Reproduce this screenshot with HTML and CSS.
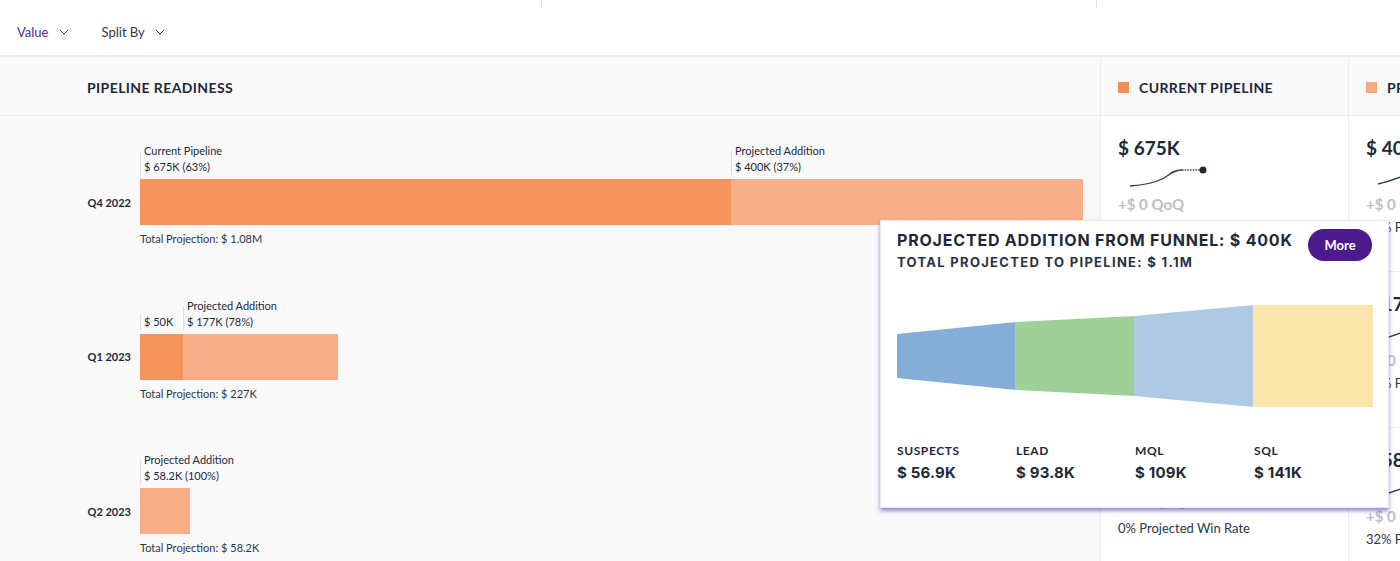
FILE: index.html
```html
<!DOCTYPE html>
<html lang="en">
<head>
  <meta charset="UTF-8">
  <title>Pipeline Readiness</title>
  <link rel="stylesheet" href="styles.css">
</head>
<body>
  <div class="stats">
    <div class="stat stat-a"></div>
    <div class="stat stat-b"></div>
    <div class="stat stat-c"></div>
  </div>

  <div class="toolbar">
    <button class="drop drop-active">Value <svg width="10" height="6" viewBox="0 0 10 6"><path d="M1 1l4 4 4-4" /></svg></button>
    <button class="drop">Split By <svg width="10" height="6" viewBox="0 0 10 6"><path d="M1 1l4 4 4-4" /></svg></button>
  </div>

  <div class="main">
    <section class="readiness">
      <div class="panel-head">PIPELINE READINESS</div>
      <div class="chart">

        <div class="row">
          <div class="notes">
            <div class="note" style="width:591px"><div>Current Pipeline</div><div>$ 675K (63%)</div></div>
            <div class="note" style="width:352px"><div>Projected Addition</div><div>$ 400K (37%)</div></div>
          </div>
          <div class="bar-line">
            <span class="quarter">Q4 2022</span>
            <div class="bar">
              <div class="seg seg-current" style="width:591px"></div>
              <div class="seg seg-projected" style="width:352px"></div>
            </div>
          </div>
          <div class="total">Total Projection: $ 1.08M</div>
        </div>

        <div class="row">
          <div class="notes">
            <div class="note" style="width:43px"><div>$ 50K</div></div>
            <div class="note" style="width:155px"><div>Projected Addition</div><div>$ 177K (78%)</div></div>
          </div>
          <div class="bar-line">
            <span class="quarter">Q1 2023</span>
            <div class="bar">
              <div class="seg seg-current" style="width:43px"></div>
              <div class="seg seg-projected" style="width:155px"></div>
            </div>
          </div>
          <div class="total">Total Projection: $ 227K</div>
        </div>

        <div class="row">
          <div class="notes">
            <div class="note" style="width:50px"><div>Projected Addition</div><div>$ 58.2K (100%)</div></div>
          </div>
          <div class="bar-line">
            <span class="quarter">Q2 2023</span>
            <div class="bar">
              <div class="seg seg-projected" style="width:50px"></div>
            </div>
          </div>
          <div class="total">Total Projection: $ 58.2K</div>
        </div>

      </div>
    </section>

    <section class="col">
      <div class="col-head"><span class="swatch swatch-current"></span>CURRENT PIPELINE</div>
      <div class="card">
        <div class="value">$ 675K</div>
        <svg class="spark" width="100" height="30" viewBox="0 0 100 30">
          <path d="M12 26 C 26 25, 36 23, 44 19 S 54 10, 64 10" />
          <path class="dots" d="M64 10 H 85" />
          <circle cx="85" cy="10" r="3.5" />
        </svg>
        <div class="qoq">+$ 0 QoQ</div>
        <div class="win">68% Projected Win Rate</div>
      </div>
      <div class="card">
        <div class="value">$ 50K</div>
        <svg class="spark" width="100" height="30" viewBox="0 0 100 30">
          <path d="M12 24 C 40 22, 60 14, 85 12" />
          <circle cx="85" cy="12" r="3.5" />
        </svg>
        <div class="qoq">+$ 0 QoQ</div>
        <div class="win">22% Projected Win Rate</div>
      </div>
      <div class="card card-flat">
        <div class="value">$ 0</div>
        <svg class="spark" width="100" height="19" viewBox="0 0 100 19">
          <path d="M12 12 H 85" />
        </svg>
        <div class="qoq">+$ 0 QoQ</div>
        <div class="win">0% Projected Win Rate</div>
      </div>
    </section>

    <section class="col">
      <div class="col-head"><span class="swatch swatch-projected"></span>PROJECTED ADDITION</div>
      <div class="card">
        <div class="value">$ 400K</div>
        <svg class="spark" width="100" height="30" viewBox="0 0 100 30">
          <path d="M12 24 C 30 20, 45 12, 70 6" />
        </svg>
        <div class="qoq">+$ 0 QoQ</div>
        <div class="win">32% Projected Win Rate</div>
      </div>
      <div class="card">
        <div class="value">$ 177K</div>
        <svg class="spark" width="100" height="30" viewBox="0 0 100 30">
          <path d="M12 24 C 30 20, 45 12, 70 6" />
        </svg>
        <div class="qoq">+$ 0 QoQ</div>
        <div class="win">32% Projected Win Rate</div>
      </div>
      <div class="card">
        <div class="value">$ 58.2K</div>
        <svg class="spark" width="100" height="30" viewBox="0 0 100 30">
          <path d="M12 24 C 30 20, 45 12, 70 6" />
        </svg>
        <div class="qoq">+$ 0 QoQ</div>
        <div class="win">32% Projected Win Rate</div>
      </div>
    </section>

    <div class="tooltip">
      <div class="tip-head">
        <div>
          <div class="tip-title">PROJECTED ADDITION FROM FUNNEL: $ 400K</div>
          <div class="tip-sub">TOTAL PROJECTED TO PIPELINE: $ 1.1M</div>
        </div>
        <button class="more">More</button>
      </div>
      <svg class="funnel" width="476" height="102" viewBox="0 0 476 102">
        <polygon fill="#84aed5" points="0,29 119,17 119,85 0,73" />
        <polygon fill="#9fd098" points="118,17 238,11 238,91 118,85" />
        <polygon fill="#adc9e4" points="237,11 357,0 357,102 237,91" />
        <rect fill="#fae5aa" x="356" y="0" width="120" height="102" />
      </svg>
      <div class="stages">
        <div><div class="stage-name">SUSPECTS</div><div class="stage-value">$ 56.9K</div></div>
        <div><div class="stage-name">LEAD</div><div class="stage-value">$ 93.8K</div></div>
        <div><div class="stage-name">MQL</div><div class="stage-value">$ 109K</div></div>
        <div><div class="stage-name">SQL</div><div class="stage-value">$ 141K</div></div>
      </div>
    </div>
  </div>
</body>
</html>
```

FILE: styles.css
```css
* { box-sizing: border-box; }
body { margin: 0; font-family: Lato, "Open Sans", sans-serif; color: #1d2939; background: #fff; overflow: hidden; height: 561px; }

.stats { display: flex; height: 8px; }
.stat-a { width: 542px; border-right: 1px solid #e4e4e8; }
.stat-b { width: 555px; border-right: 1px solid #e4e4e8; }
.stat-c { flex: 1; }

.toolbar { height: 49px; display: flex; align-items: center; gap: 33px; padding: 0 0 0 17px; border-bottom: 2px solid #ebebf0; }
.drop { font: inherit; font-size: 13px; background: none; border: 0; padding: 0; color: #2d3748; display: flex; align-items: center; gap: 10px; cursor: pointer; }
.drop svg path { fill: none; stroke: currentColor; stroke-width: 1; }
.drop-active { color: #4f2a8f; }

.main { display: flex; position: relative; height: 504px; }

.readiness { flex: 0 0 1100px; background: #f9f9fa; }
.panel-head { height: 59px; line-height: 58px; padding: 2px 0 0 87px; font-size: 14px; font-weight: 700; border-bottom: 1px solid #ececef; letter-spacing: 0.4px; }
.chart { padding-top: 27px; }
.row { height: 154.5px; }
.notes { display: flex; align-items: flex-end; margin-left: 140px; padding-bottom: 4px; font-size: 11px; line-height: 16px; color: #1d2939; }
.note { padding-left: 4px; white-space: nowrap; background: linear-gradient(#dde0e6, #dde0e6) left bottom / 1px 24px no-repeat; }
.bar-line { display: flex; align-items: center; }
.quarter { width: 140px; padding-right: 9px; text-align: right; font-size: 11px; font-weight: 700; }
.bar { display: flex; height: 46px; }
.seg-current { background: #f5955d; }
.seg-projected { background: #f8af88; }
.total { margin: 6px 0 0 140px; font-size: 11px; line-height: 16px; color: #2b3647; }

.col { flex: 0 0 248px; border-left: 1px solid #ececef; }
.col-head { height: 59px; display: flex; align-items: center; gap: 10px; padding-left: 17px; padding-top: 3px; background: #f9f9fa; border-bottom: 1px solid #ececef; font-size: 14px; font-weight: 700; white-space: nowrap; letter-spacing: 0.4px; }
.swatch { width: 11px; height: 11px; }
.swatch-current { background: #f58c51; }
.swatch-projected { background: #f8a97c; }

.card { height: 156px; padding: 20px 17px 0; border-bottom: 1px solid #ececef; white-space: nowrap; }
.value { font-size: 19px; line-height: 24px; font-weight: 700; }
.spark { display: block; }
.spark path { fill: none; stroke: #2d3a4f; stroke-width: 1.3; }
.spark .dots { stroke-dasharray: 1.5 1.2; }
.spark circle { fill: #1d2939; }
.qoq { margin-top: 4px; font-size: 15px; line-height: 20px; font-weight: 700; color: #bcc0c7; }
.win { margin-top: 4px; font-size: 13px; line-height: 18px; color: #2b3647; }
.card-flat .qoq { margin-top: 0; }
.card-flat .win { margin-top: 8px; }

.tooltip { position: absolute; left: 880px; top: 163px; width: 509px; height: 288px; padding: 9px 16px 0 16px; background: #fff; border: 1px solid #ebe7f2; box-shadow: 0 3px 4px rgba(86, 42, 160, 0.55); }
.tip-head { display: flex; justify-content: space-between; }
.tip-title { font-family: Inter, sans-serif; font-size: 16px; line-height: 20px; font-weight: 700; letter-spacing: 0.8px; color: #1d2939; white-space: nowrap; }
.tip-sub { margin-top: 3px; font-family: Inter, sans-serif; font-size: 13px; line-height: 18px; font-weight: 700; letter-spacing: 1.3px; color: #273245; white-space: nowrap; }
.more { margin-top: -1px; width: 64px; height: 32px; border: 0; border-radius: 16px; background: #4b1a8c; color: #fff; font-family: Lato, sans-serif; font-size: 13px; font-weight: 700; }
.funnel { display: block; margin-top: 34px; }
.stages { display: grid; grid-template-columns: repeat(4, 119px); margin-top: 36px; }
.stage-name { font-size: 12px; line-height: 16px; font-weight: 700; letter-spacing: 0.6px; }
.stage-value { margin-top: 4px; font-family: Inter, sans-serif; font-size: 15px; line-height: 20px; font-weight: 700; letter-spacing: 0.2px; }
```
